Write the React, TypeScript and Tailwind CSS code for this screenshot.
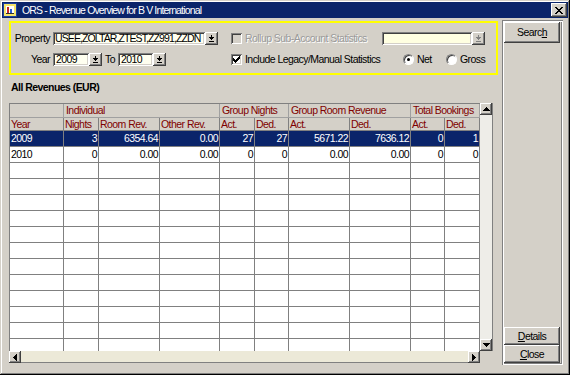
import React from 'react';

const raised =
  'bg-[#d4d0c8] shadow-[inset_-1px_-1px_#404040,inset_1px_1px_#ffffff,inset_-2px_-2px_#808080,inset_2px_2px_#d4d0c8]';
const sunken =
  'shadow-[inset_1px_1px_#808080,inset_-1px_-1px_#ffffff,inset_2px_2px_#404040,inset_-2px_-2px_#d4d0c8]';

const HEAD = 'text-[#800000]';

function DropArrow({ disabled }: { disabled?: boolean }) {
  const c = disabled ? '#808080' : '#000000';
  return (
    <svg width="7" height="7" viewBox="0 0 7 7" shapeRendering="crispEdges">
      <rect x="3" y="0" width="1" height="2" fill={c} />
      <rect x="1" y="2" width="5" height="1" fill={c} />
      <rect x="2" y="3" width="3" height="1" fill={c} />
      <rect x="3" y="4" width="1" height="1" fill={c} />
      <rect x="1" y="6" width="5" height="1" fill={c} />
    </svg>
  );
}

function DropButton({ disabled }: { disabled?: boolean }) {
  return (
    <div className={`w-[13px] h-[13px] shrink-0 flex items-center justify-center ${raised}`}>
      <DropArrow disabled={disabled} />
    </div>
  );
}

function Arrow({ dir }: { dir: 'up' | 'down' | 'left' | 'right' }) {
  if (dir === 'up' || dir === 'down') {
    const rows = dir === 'up' ? [3, 2, 1, 0] : [0, 1, 2, 3];
    return (
      <svg width="7" height="4" viewBox="0 0 7 4" shapeRendering="crispEdges">
        {rows.map((inset, i) => (
          <rect key={i} x={inset} y={i} width={7 - inset * 2} height="1" fill="#000" />
        ))}
      </svg>
    );
  }
  const cols = dir === 'left' ? [3, 2, 1, 0] : [0, 1, 2, 3];
  return (
    <svg width="4" height="7" viewBox="0 0 4 7" shapeRendering="crispEdges">
      {cols.map((inset, i) => (
        <rect key={i} x={i} y={inset} width="1" height={7 - inset * 2} fill="#000" />
      ))}
    </svg>
  );
}

function CheckBox({ checked, disabled }: { checked?: boolean; disabled?: boolean }) {
  return (
    <div
      className={`w-[11px] h-[11px] shrink-0 flex items-center justify-center ${sunken} ${
        disabled ? 'bg-[#d4d0c8]' : 'bg-white'
      }`}
    >
      {checked && (
        <svg width="7" height="7" viewBox="0 0 7 7" shapeRendering="crispEdges">
          <path d="M0 2h1v1h1v1h1V3h1V2h1V1h1V0h1v3H6v1H5v1H4v1H3v1H2V6H1V5H0z" fill="#000" />
        </svg>
      )}
    </div>
  );
}

function Radio({ checked }: { checked?: boolean }) {
  return (
    <div className="w-[11px] h-[11px] shrink-0 rounded-full bg-white border border-t-[#808080] border-l-[#808080] border-b-[#ffffff] border-r-[#ffffff] shadow-[inset_1px_1px_#404040] flex items-center justify-center">
      {checked && <div className="w-[3px] h-[3px] rounded-full bg-black" />}
    </div>
  );
}

const rows: string[][] = [
  ['2009', '3', '6354.64', '0.00', '27', '27', '5671.22', '7636.12', '0', '1'],
  ['2010', '0', '0.00', '0.00', '0', '0', '0.00', '0.00', '0', '0'],
];
const emptyRows = Array.from({ length: 14 });

const GRID = 'grid grid-cols-[54px_35px_61px_60px_35px_34px_61px_61px_34px_35px]';

export default function App() {
  return (
    <div className="w-[570px] h-[375px] bg-[#d4d0c8] p-[2px] flex flex-col overflow-hidden whitespace-nowrap text-[10.5px] tracking-[-0.55px] leading-[13px] text-black font-['Liberation_Sans',Arial,sans-serif] shadow-[inset_-1px_-1px_#000000,inset_1px_1px_#d4d0c8,inset_-2px_-2px_#808080,inset_2px_2px_#ffffff]">
      {/* Title bar */}
      <div className="h-[16px] shrink-0 bg-[#0a246a] flex items-center pl-[1px] pr-[1px]">
        <svg width="14" height="14" viewBox="0 0 14 14" shapeRendering="crispEdges">
          <rect x="0" y="0" width="14" height="14" fill="#1c3f9e" />
          <rect x="1" y="1" width="12" height="12" fill="#f4e46a" />
          <rect x="3" y="3" width="8" height="8" fill="#ffffff" />
          <rect x="4" y="4" width="2" height="6" fill="#c0282a" />
          <rect x="7" y="6" width="2" height="4" fill="#2a5fd0" />
          <rect x="3" y="10" width="8" height="1" fill="#303030" />
        </svg>
        <span className="ml-[5px] text-white text-[10.5px] tracking-[-0.85px]">
          ORS - Revenue Overview for B V International
        </span>
        <div className={`ml-auto w-[16px] h-[14px] flex items-center justify-center ${raised}`}>
          <svg width="8" height="7" viewBox="0 0 8 7" shapeRendering="crispEdges">
            <path d="M0 0h2v1h1v1h2V1h1V0h2v1H7v1H6v1H5v1h1v1h1v1h1v1H6V6H5V5H3v1H2v1H0V6h1V5h1V4h1V3H2V2H1V1H0z" fill="#000" />
          </svg>
        </div>
      </div>

      <div className="flex flex-1 min-h-0">
        {/* Main column */}
        <div className="w-[500px] shrink-0 flex flex-col">
          {/* Filter box */}
          <div className="mt-[3px] ml-[7px] w-[489px] h-[54px] border-2 border-[#ffff00] pt-[9px] flex flex-col gap-[8px]">
            <div className="flex items-center h-[13px]">
              <div className="w-[220px] flex items-center">
                <span className="w-[42px] text-right pr-[3px]">Property</span>
                <div className={`w-[152px] h-[13px] bg-[#fffff0] overflow-hidden pl-[2px] tracking-[-0.9px] ${sunken}`}>
                  USEE,ZOLTAR,ZTEST,ZZ991,ZZDN
                </div>
                <DropButton />
              </div>
              <div className="w-[151px] flex items-center">
                <CheckBox disabled />
                <span className="ml-[3px] text-[#9a9a9a] [text-shadow:1px_1px_#ffffff]">
                  Rollup Sub-Account Statistics
                </span>
              </div>
              <div className={`w-[90px] h-[13px] bg-[#ffffe1] ${sunken}`} />
              <DropButton disabled />
            </div>
            <div className="flex items-center h-[13px]">
              <div className="w-[220px] flex items-center">
                <span className="w-[42px] text-right pr-[3px]">Year</span>
                <div className={`w-[36px] h-[13px] bg-[#fffff0] pl-[3px] ${sunken}`}>2009</div>
                <DropButton />
                <span className="w-[16px] pl-[3px]">To</span>
                <div className={`w-[35px] h-[13px] bg-[#fffff0] pl-[3px] ${sunken}`}>2010</div>
                <DropButton />
              </div>
              <div className="w-[172px] flex items-center">
                <CheckBox checked />
                <span className="ml-[3px]">Include Legacy/Manual Statistics</span>
              </div>
              <div className="w-[43px] flex items-center">
                <Radio checked />
                <span className="ml-[3px]">Net</span>
              </div>
              <div className="flex items-center">
                <Radio />
                <span className="ml-[3px]">Gross</span>
              </div>
            </div>
          </div>

          <div className="mt-[6px] ml-[9px] h-[13px] font-bold">All Revenues (EUR)</div>

          {/* Grid + scrollbars */}
          <div className="mt-[9px] ml-[7px] flex flex-col w-[484px]">
            <div className="flex h-[248px]">
              <div className="w-[471px] h-[248px] overflow-hidden border-l border-t border-[#808080] bg-white">
                <div className={`${GRID} bg-[#d4d0c8]`}>
                  <div className="h-[14px] border-r border-b border-[#a0a0a0]" />
                  <div className={`col-span-3 h-[14px] border-r border-b border-[#a0a0a0] pl-[2px] ${HEAD}`}>Individual</div>
                  <div className={`col-span-2 h-[14px] border-r border-b border-[#a0a0a0] pl-[2px] ${HEAD}`}>Group Nights</div>
                  <div className={`col-span-2 h-[14px] border-r border-b border-[#a0a0a0] pl-[2px] ${HEAD}`}>Group Room Revenue</div>
                  <div className={`col-span-2 h-[14px] border-r border-b border-[#a0a0a0] pl-[2px] overflow-hidden ${HEAD}`}>Total Bookings</div>
                  {['Year', 'Nights', 'Room Rev.', 'Other Rev.', 'Act.', 'Ded.', 'Act.', 'Ded.', 'Act.', 'Ded.'].map((h, i) => (
                    <div key={i} className={`h-[13px] leading-[12px] border-r border-b border-[#808080] pl-[1px] overflow-hidden ${HEAD}`}>
                      {h}
                    </div>
                  ))}
                </div>
                {rows.map((r, ri) => (
                  <div key={ri} className={`${GRID} ${ri === 0 ? 'bg-[#0a246a] text-white' : 'bg-white'}`}>
                    {r.map((v, ci) => (
                      <div
                        key={ci}
                        className={`h-[16px] leading-[15px] border-r border-b border-[#808080] overflow-hidden ${
                          ci === 0 ? 'pl-[1px]' : 'text-right pr-[1px]'
                        }`}
                      >
                        {v}
                      </div>
                    ))}
                  </div>
                ))}
                {emptyRows.map((_, ri) => (
                  <div key={ri} className={GRID}>
                    {Array.from({ length: 10 }).map((__, ci) => (
                      <div key={ci} className="h-[16px] border-r border-b border-[#808080]" />
                    ))}
                  </div>
                ))}
              </div>
              {/* vertical scrollbar */}
              <div className="w-[13px] h-[248px] flex flex-col bg-[#eeede8] shadow-[inset_-1px_0_#808080]">
                <div className={`w-[12px] h-[12px] flex items-center justify-center ${raised}`}>
                  <Arrow dir="up" />
                </div>
                <div className="flex-1" />
                <div className={`w-[12px] h-[12px] flex items-center justify-center ${raised}`}>
                  <Arrow dir="down" />
                </div>
              </div>
            </div>
            {/* horizontal scrollbar */}
            <div className="w-[471px] h-[12px] flex bg-[#ece9d8] shadow-[inset_0_-1px_#808080]">
              <div className={`w-[12px] h-[12px] flex items-center justify-center ${raised}`}>
                <Arrow dir="left" />
              </div>
              <div className="flex-1" />
              <div className={`w-[12px] h-[12px] flex items-center justify-center ${raised}`}>
                <Arrow dir="right" />
              </div>
            </div>
          </div>
        </div>

        {/* Button panel */}
        <div className="mt-[2px] w-[61px] h-[345px] flex flex-col pl-[2px] pr-[3px] pt-[2px] pb-[2px] shadow-[inset_1px_1px_#808080,inset_2px_2px_#ffffff,inset_-1px_-1px_#ffffff,inset_-2px_-2px_#808080]">
          <div className={`h-[21px] flex items-center justify-center ${raised}`}>
            <span>
              Searc<span className="underline">h</span>
            </span>
          </div>
          <div className="flex-1" />
          <div className={`h-[18px] flex items-center justify-center ${raised}`}>
            <span>
              <span className="underline">D</span>etails
            </span>
          </div>
          <div className={`h-[18px] flex items-center justify-center ${raised}`}>
            <span>
              <span className="underline">C</span>lose
            </span>
          </div>
        </div>
      </div>
    </div>
  );
}
